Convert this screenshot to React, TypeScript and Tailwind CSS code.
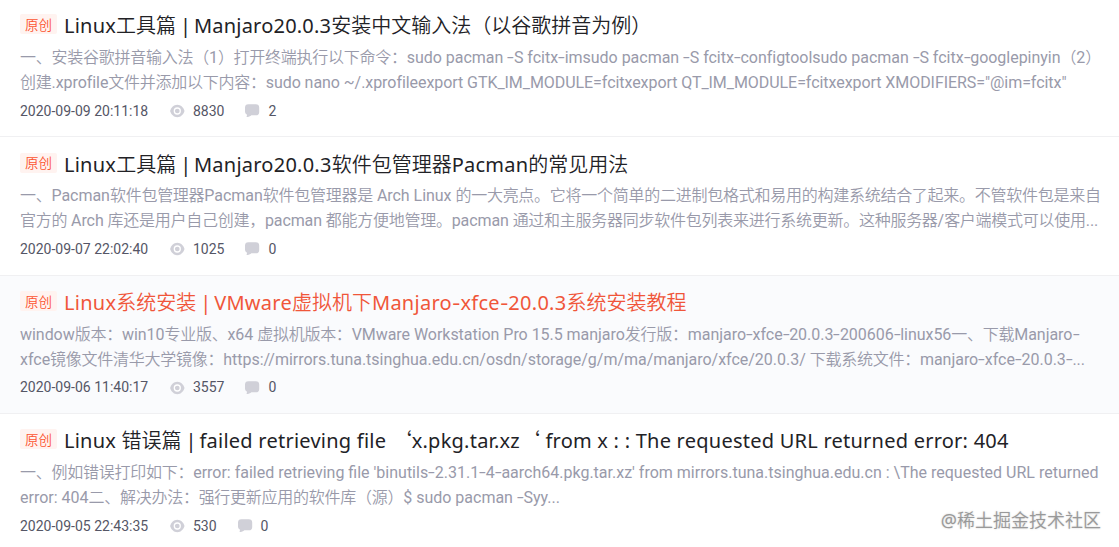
import { Fragment } from "react";

type Line = { text: string; tracking: string };
type Post = {
  title: string;
  titleTracking: string;
  lines: Line[];
  date: string;
  views: string;
  comments: string;
  active?: boolean;
};

const posts: Post[] = [
  {
    title: "Linux工具篇 | Manjaro20.0.3安装中文输入法（以谷歌拼音为例）",
    titleTracking: "tracking-[0.22px]",
    lines: [
      {
        text: "一、安装谷歌拼音输入法（1）打开终端执行以下命令：sudo pacman -S fcitx-imsudo pacman -S fcitx-configtoolsudo pacman -S fcitx-googlepinyin（2）",
        tracking: "tracking-[-0.02px]",
      },
      {
        text: "创建.xprofile文件并添加以下内容：sudo nano ~/.xprofileexport GTK_IM_MODULE=fcitxexport QT_IM_MODULE=fcitxexport XMODIFIERS=\"@im=fcitx\"",
        tracking: "tracking-[-0.06px]",
      },
    ],
    date: "2020-09-09 20:11:18",
    views: "8830",
    comments: "2",
  },
  {
    title: "Linux工具篇 | Manjaro20.0.3软件包管理器Pacman的常见用法",
    titleTracking: "tracking-[0.24px]",
    lines: [
      {
        text: "一、Pacman软件包管理器Pacman软件包管理器是 Arch Linux 的一大亮点。它将一个简单的二进制包格式和易用的构建系统结合了起来。不管软件包是来自",
        tracking: "tracking-[-0.04px]",
      },
      {
        text: "官方的 Arch 库还是用户自己创建，pacman 都能方便地管理。pacman 通过和主服务器同步软件包列表来进行系统更新。这种服务器/客户端模式可以使用...",
        tracking: "tracking-[-0.1px]",
      },
    ],
    date: "2020-09-07 22:02:40",
    views: "1025",
    comments: "0",
  },
  {
    title: "Linux系统安装 | VMware虚拟机下Manjaro-xfce-20.0.3系统安装教程",
    titleTracking: "tracking-[0.27px]",
    lines: [
      {
        text: "window版本：win10专业版、x64 虚拟机版本：VMware Workstation Pro 15.5 manjaro发行版：manjaro-xfce-20.0.3-200606-linux56一、下载Manjaro-",
        tracking: "tracking-[-0.04px]",
      },
      {
        text: "xfce镜像文件清华大学镜像：https://mirrors.tuna.tsinghua.edu.cn/osdn/storage/g/m/ma/manjaro/xfce/20.0.3/ 下载系统文件：manjaro-xfce-20.0.3-...",
        tracking: "tracking-[-0.02px]",
      },
    ],
    date: "2020-09-06 11:40:17",
    views: "3557",
    comments: "0",
    active: true,
  },
  {
    title: "Linux 错误篇 | failed retrieving file ‘x.pkg.tar.xz‘ from x : : The requested URL returned error: 404",
    titleTracking: "tracking-[0.24px]",
    lines: [
      {
        text: "一、例如错误打印如下：error: failed retrieving file 'binutils-2.31.1-4-aarch64.pkg.tar.xz' from mirrors.tuna.tsinghua.edu.cn : \\The requested URL returned",
        tracking: "tracking-[0px]",
      },
      {
        text: "error: 404二、解决办法：强行更新应用的软件库（源）$ sudo pacman -Syy...",
        tracking: "tracking-[-0.01px]",
      },
    ],
    date: "2020-09-05 22:43:35",
    views: "530",
    comments: "0",
  },
];

const RUNS = /([\u2018\u3000-\u303f\u4e00-\u9fff\uff00-\uffef]+|-| \| )/;

/* CJK runs, the title divider and hyphens each get their own spacing. */
function Mixed({ text, body = false }: { text: string; body?: boolean }) {
  return (
    <>
      {text.split(RUNS).map((run, i) => {
        if (i % 2 === 0) return <Fragment key={i}>{run}</Fragment>;
        if (run === "-") {
          return (
            <span
              key={i}
              className={`inline-block ${body ? "mx-[1.1px] scale-x-150" : "mx-[0.9px] scale-x-125"}`}
            >
              -
            </span>
          );
        }
        if (run === " | ") {
          return (
            <span key={i} className="tracking-[-1.2px]">
              {run}
            </span>
          );
        }
        return (
          <span
            key={i}
            className={`font-['Noto_Sans_CJK_SC',sans-serif] font-[350] ${body ? "tracking-[-0.26px]" : "tracking-normal"}`}
          >
            {run}
          </span>
        );
      })}
    </>
  );
}

function EyeIcon() {
  return (
    <svg className="h-4 w-4" viewBox="0 0 16 16" fill="none">
      <path
        d="M8.3 1.8C4.8 1.8 2.1 4.6 1.1 8c1 3.4 3.7 6.2 7.2 6.2s6.200-2.800 7.200-6.200C14.500 4.600 11.800 1.800 8.300 1.800Z"
        fill="#d0d0d8"
      />
      <circle cx="8.3" cy="8" r="3" stroke="#fff" strokeWidth="1.3" />
    </svg>
  );
}

function CommentIcon() {
  return (
    <svg className="h-4 w-4" viewBox="0 0 16 16">
      <path
        d="M4.4 1.2h7.400a3.400 3.400 0 0 1 3.400 3.400v4.300a3.400 3.400 0 0 1-3.400 3.400H7.400c-1.200 1.100-2.800 1.800-5 1.800.6-.8.6-1.600.4-2.500A3.400 3.400 0 0 1 1 8.900V4.600a3.400 3.400 0 0 1 3.400-3.400Z"
        fill="#d0d0d8"
      />
    </svg>
  );
}

function PostRow({ post }: { post: Post }) {
  return (
    <article
      className={`h-[138.4px] shrink-0 border-b border-[#f0f0f2] pl-5 pt-[14.8px] ${post.active ? "bg-[#fafbfd]" : "bg-white"}`}
    >
      <div className="flex h-6 items-center">
        <span className="mb-[3px] flex h-5 w-[37px] items-center justify-center rounded-xs bg-[#fff3f0] font-['Noto_Sans_CJK_SC',sans-serif] text-[13.5px] font-[350] text-[#fc5531]">
          原创
        </span>
        <h2
          className={`ml-[7px] whitespace-pre font-['Noto_Sans','Noto_Sans_CJK_SC',sans-serif] text-[20px] leading-6 ${post.titleTracking} ${post.active ? "text-[#f0563a]" : "text-[#222226]"}`}
        >
          <Mixed text={post.title} />
        </h2>
      </div>
      <div className="mt-[6.2px] text-[16px] leading-[25px] text-[#999aaa]">
        {post.lines.map((line) => (
          <p key={line.text} className="h-[25px]">
            <span className={`whitespace-pre ${line.tracking}`}>
              <Mixed text={line.text} body />
            </span>
          </p>
        ))}
      </div>
      <div className="mt-[7.3px] flex h-5 items-center text-[14px] text-[#555666]">
        <span className="w-[149px]">{post.date}</span>
        <EyeIcon />
        <span className="ml-2">{post.views}</span>
        <span className="ml-5 flex">
          <CommentIcon />
        </span>
        <span className="ml-2">{post.comments}</span>
      </div>
    </article>
  );
}

export default function App() {
  return (
    <main className="relative h-[547px] w-[1119px] overflow-hidden bg-white font-['Roboto','Noto_Sans_CJK_SC',sans-serif]">
      <div className="-mt-[1.2px] flex flex-col">
        {posts.map((post) => (
          <PostRow key={post.date} post={post} />
        ))}
      </div>
      <span className="absolute bottom-[15px] right-[18px] whitespace-nowrap font-['Noto_Sans','Noto_Sans_CJK_SC',sans-serif] text-[18px] leading-6 text-[#999] [text-shadow:0_0_2px_#ccc]">
        <Mixed text="@稀土掘金技术社区" />
      </span>
    </main>
  );
}
